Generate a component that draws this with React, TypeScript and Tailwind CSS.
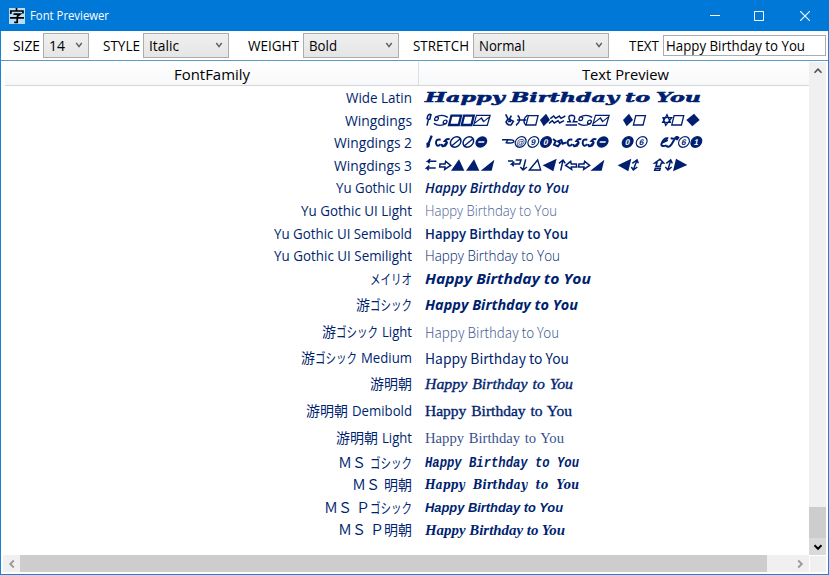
import { useLayoutEffect, useRef, useState } from "react";
import type { ReactNode } from "react";

const UI = "font-['Open_Sans','Noto_Sans_CJK_JP',sans-serif]";
const PHRASE = "Happy Birthday to You";

/** Single line of text stretched horizontally to an exact advance width. */
function Fit({ text, width, className = "" }: { text: string; width: number; className?: string }) {
  const ref = useRef<HTMLSpanElement>(null);
  const [scale, setScale] = useState(1);
  useLayoutEffect(() => {
    const exact = ref.current ? parseFloat(getComputedStyle(ref.current).width) : 0;
    if (exact) setScale(width / exact);
  }, [text, width]);
  return (
    <span className="flex shrink-0 whitespace-pre" style={{ width }}>
      <span ref={ref} className={`block shrink-0 origin-left ${className}`} style={{ transform: `scaleX(${scale})` }}>
        {text}
      </span>
    </span>
  );
}

function Chevron({ className, path }: { className: string; path: string }) {
  return (
    <svg className={className} viewBox="0 0 10 10" fill="none" stroke="currentColor">
      <path d={path} />
    </svg>
  );
}

function Combo({ value, textWidth, className }: { value: string; textWidth: number; className: string }) {
  return (
    <div className={`flex h-[25px] shrink-0 items-start justify-between border border-[#acacac] bg-linear-to-b from-[#f0f0f0] to-[#e5e5e5] pl-[5px] pr-[4px] ${className}`}>
      <Fit text={value} width={textWidth} className="text-[14px] leading-[23px]" />
      <Chevron className="mt-[6px] size-[10px] text-[#606060] [stroke-width:1.5]" path="M2.3 3 L5 6.6 L7.7 3" />
    </div>
  );
}

function Cancer({ x, y }: { x: number; y: number }) {
  return (
    <g transform={`translate(${x} ${y}) skewX(-12)`} strokeWidth="4">
      <circle cx="9" cy="12" r="5.5" />
      <circle cx="37" cy="22" r="5.5" />
      <path d="M4 8 Q22 -4 42 8 M42 26 Q24 38 4 26" />
    </g>
  );
}

function Envelope({ x, y }: { x: number; y: number }) {
  return (
    <g transform={`translate(${x} ${y}) skewX(-16)`} strokeWidth="3.8">
      <path d="M5 2 H46 V32 H5 Z M5 27 L22 10 L32 21 L46 6" />
    </g>
  );
}

function Box({ x, y, w = 4 }: { x: number; y: number; w?: number }) {
  return <path transform={`translate(${x} ${y}) skewX(-14)`} strokeWidth={w} d="M4 3 H33 V31 H4 Z" />;
}

function SymbolRow({ children }: { children: ReactNode }) {
  return (
    <svg className="-ml-[10px] h-[22px] w-[300px] shrink-0" viewBox="0 0 900 66" fill="none" stroke="currentColor" role="img" aria-label={PHRASE}>
      {children}
    </svg>
  );
}

function Wingdings() {
  return (
    <SymbolRow>
      <g transform="translate(22 0)">
        <path strokeWidth="4.5" d="M14 47 L19 25 M23 26 L26 14 Q20 11 16 18 L14 28 M25 16 L22 30" />
        <Cancer x={36} y={14} />
        <Box x={84} y={14} w={7} />
        <Box x={122} y={14} w={7} />
        <Envelope x={158} y={14} />
        <path strokeWidth="5" d="M250 13 L257 27 L251 36 Q256 48 267 44 L273 34 L261 28 L267 17 M257 27 L261 28 M257 34 H266" />
        <path strokeWidth="4.5" d="M286 16 Q301 29 281 46 M316 15 Q296 30 311 46 M284 30 H312" />
        <Box x={315} y={14} />
        <path fill="currentColor" stroke="none" d="M371 11 L383 30 L364 49 L353 30 Z" />
        <path strokeWidth="4.5" d="M384 26 L394 18 L400 25 L411 18 L416 25 L429 18 M380 40 L390 32 L396 39 L407 32 L412 39 L425 32" />
        <path strokeWidth="4.5" d="M430 45 H464 M434 35 H444 Q433 16 449 16 Q463 17 453 35 H466" />
        <Cancer x={469} y={14} />
        <Envelope x={515} y={14} />
        <path fill="currentColor" stroke="none" d="M620 11 L632 30 L613 49 L602 30 Z" />
        <Box x={637} y={14} />
        <path strokeWidth="4" d="M734 14 L744 37 L721 37 Z M730 46 L722 23 L748 23 Z" />
        <Box x={752} y={14} />
        <path fill="currentColor" stroke="none" d="M815 11 L832 30 L810 49 L792 30 Z" />
      </g>
    </SymbolRow>
  );
}

function Disc({ x, n, solid = false }: { x: number; n: string; solid?: boolean }) {
  return (
    <g transform={`translate(${x} 30) skewX(-12)`}>
      <circle r="16" strokeWidth="3.5" fill={solid ? "currentColor" : "none"} />
      <text className="font-['Liberation_Sans',sans-serif] text-[25px] font-bold" textAnchor="middle" y="9" stroke="none" fill={solid ? "white" : "currentColor"}>
        {n}
      </text>
    </g>
  );
}

/** Crossed-out ring. */
function Barred({ x }: { x: number }) {
  return (
    <g transform={`translate(${x} 30) skewX(-12)`} strokeWidth="4.5">
      <circle r="15.5" />
      <path d="M-9 11 L11 -9" />
    </g>
  );
}

/** Filled ring with a horizontal white bar. */
function Minus({ x }: { x: number }) {
  return (
    <g transform={`translate(${x} 30) skewX(-12)`}>
      <circle r="17.5" fill="currentColor" stroke="none" />
      <path stroke="white" strokeWidth="5" d="M-9 0 H9" />
    </g>
  );
}

function Loop({ x }: { x: number }) {
  return <path transform={`translate(${x} 18)`} strokeWidth="6" d="M17 5 Q2 2 3 16 Q6 29 17 19 M21 18 Q19 29 31 23 Q42 10 29 9 Q36 0 44 4 M25 25 L36 13" />;
}

function Wingdings2() {
  return (
    <SymbolRow>
      <g transform="translate(22 0)">
        <path strokeWidth="7" d="M28 11 L19 34" />
        <path fill="currentColor" stroke="none" d="M12 34 Q18 27 23 35 Q24 46 13 48 Z" />
        <Loop x={38} />
        <Barred x={100} />
        <Barred x={138} />
        <Minus x={177} />
        <path strokeWidth="4.5" d="M239 23 H257 Q277 22 274 30 Q267 35 252 32 L256 24" />
        <Disc x={295} n="@" />
        <Disc x={333} n="9" />
        <Disc x={371} n="0" solid />
        <path strokeWidth="6" d="M392 21 L400 27 L395 38 L407 43 L414 34 L407 28 L417 24 L421 35 L433 31" />
        <Loop x={433} />
        <Loop x={478} />
        <Minus x={541} />
        <Disc x={616} n="0" solid />
        <Disc x={658} n="6" />
        <path strokeWidth="6" d="M738 19 Q725 16 718 34 Q714 46 733 40 M720 32 L736 24 M745 19 L757 21 L747 38 Q738 49 732 41 M757 21 Q763 11 768 17 L762 24" />
        <Disc x={785} n="6" />
        <Disc x={822} n="1" solid />
      </g>
    </SymbolRow>
  );
}

function RightArrow({ x, flip = false }: { x: number; flip?: boolean }) {
  return (
    <path transform={flip ? `translate(${x + 38} 16) scale(-1 1)` : `translate(${x} 16)`} strokeWidth="4.5" d="M3 10 H18 L20 2 L35 14 L17 26 L18 19 H2 Z" />
  );
}

function Wingdings3() {
  return (
    <SymbolRow>
      <g transform="translate(21 1)">
        <path strokeWidth="4.5" d="M43 18 H17 L25 11 M17 18 L23 24 M41 38 H14 L22 31 M14 38 L20 45" />
        <RightArrow x={51} />
        <g fill="currentColor" stroke="none">
          <path d="M87 46 L111 12 L127 46 Z M132 46 L156 12 L172 46 Z M176 46 L217 13 L209 46 Z" />
          <path d="M362 30 L404 10 L394 48 Z M505 46 L547 13 L539 46 Z M587 30 L628 10 L619 48 Z M762 10 L796 29 L753 48 Z" />
        </g>
        <path strokeWidth="4.5" d="M258 17 H273 M281 14 H297 L293 26 H269 L277 19 M269 26 L275 33 M311 12 L303 44 M295 35 L303 44 L315 35 M416 46 L423 15 M411 24 L423 14 L430 24" />
        <path strokeWidth="4" d="M322 44 L347 14 L356 44 Z" />
        <RightArrow x={428} flip />
        <RightArrow x={468} />
        <path strokeWidth="4.5" d="M634 43 L645 15 M631 24 L645 14 L649 24 M628 35 L634 44 L646 35" />
        <path strokeWidth="4.5" d="M698 23 L714 12 L725 23 H718 L715 33 H702 L705 23 Z M700 39 H715 L713 45 H698 Z M738 43 L746 15 M733 24 L746 14 L751 24 M730 35 L738 44 L749 35" />
      </g>
    </SymbolRow>
  );
}

type Seg = [text: string, width: number, gap?: number];
type Row = { label: Seg[]; h: string; preview: ReactNode };

const sample = (width: number, className: string) => <Fit text={PHRASE} width={width} className={className} />;

const ROWS: Row[] = [
  { label: [["Wide Latin", 66]], h: "h-[22px]", preview: sample(276, "font-['DejaVu_Serif',serif] text-[12px] font-bold italic [-webkit-text-stroke:0.5px_currentColor] [word-spacing:-1px]") },
  { label: [["Wingdings", 67]], h: "h-[23px]", preview: <Wingdings /> },
  { label: [["Wingdings 2", 78]], h: "h-[22px]", preview: <Wingdings2 /> },
  { label: [["Wingdings 3", 78]], h: "h-[23px]", preview: <Wingdings3 /> },
  { label: [["Yu Gothic UI", 76]], h: "h-[22px]", preview: sample(144, "text-[14px] font-semibold italic") },
  { label: [["Yu Gothic UI Light", 111]], h: "h-[23px]", preview: sample(132, "text-[14px] font-light opacity-75") },
  { label: [["Yu Gothic UI Semibold", 138]], h: "h-[23px]", preview: sample(143, "text-[14px] font-semibold") },
  { label: [["Yu Gothic UI Semilight", 138]], h: "h-[22px]", preview: sample(135, "text-[14px] font-light") },
  { label: [["メイリオ", 42]], h: "h-[24px]", preview: sample(166, "font-['Open_Sans',sans-serif] text-[14px] font-bold italic") },
  { label: [["游", 14], ["ゴシック", 42]], h: "h-[27px]", preview: sample(153, "text-[14px] font-bold italic") },
  { label: [["游", 14], ["ゴシック", 42], ["Light", 30, 4]], h: "h-[27px]", preview: sample(134, "font-['Noto_Sans_CJK_JP',sans-serif] text-[14px] font-light opacity-75") },
  { label: [["游", 14], ["ゴシック", 42], ["Medium", 51, 4]], h: "h-[26px]", preview: sample(144, "font-['Noto_Sans_CJK_JP',sans-serif] text-[14px]") },
  { label: [["游明朝", 42]], h: "h-[26px]", preview: sample(148, "font-['Liberation_Serif',serif] text-[15px] italic [word-spacing:1px] [-webkit-text-stroke:0.35px_currentColor]") },
  { label: [["游明朝", 42], ["Demibold", 60, 4]], h: "h-[27px]", preview: sample(147, "font-['Liberation_Serif',serif] text-[15px] [word-spacing:1px] [-webkit-text-stroke:0.35px_currentColor]") },
  { label: [["游明朝", 42], ["Light", 30, 4]], h: "h-[27px]", preview: sample(139, "font-['Liberation_Serif',serif] text-[15px] [word-spacing:1px] opacity-80") },
  { label: [["ＭＳ", 28], ["ゴシック", 42, 4]], h: "h-[23px]", preview: sample(154, "font-['Liberation_Mono',monospace] text-[14px] font-bold italic") },
  { label: [["ＭＳ", 28], ["明朝", 28, 4]], h: "h-[22px]", preview: sample(154, "font-['DejaVu_Serif',serif] text-[12.5px] font-bold italic [word-spacing:5px]") },
  { label: [["ＭＳ", 28], ["Ｐ", 14, 4], ["ゴシック", 42]], h: "h-[23px]", preview: sample(138, "font-['Liberation_Sans',sans-serif] text-[13px] font-bold italic") },
  { label: [["ＭＳ", 28], ["Ｐ", 14, 4], ["明朝", 28]], h: "h-[22px]", preview: sample(140, "font-['Liberation_Serif',serif] text-[14.5px] font-bold italic") },
];

function FontRow({ row }: { row: Row }) {
  return (
    <div className={`flex shrink-0 items-center ${row.h}`}>
      <div className="flex w-[408px] shrink-0 justify-end text-[14px] leading-[22px]">
        {row.label.map(([text, width, gap], i) => (
          <span key={i} className="flex shrink-0" style={{ marginLeft: gap ?? 0 }}>
            <Fit text={text} width={width} />
          </span>
        ))}
      </div>
      <div className="ml-[13px] flex items-center text-[14px] leading-[22px]">{row.preview}</div>
    </div>
  );
}

function TitleBar() {
  return (
    <div className="flex h-[31px] shrink-0 items-center bg-[#0078d7] text-white">
      <svg className="ml-[9px] size-[16px]" viewBox="0 0 16 16" fill="none" stroke="black">
        <path fill="#b9ddf7" stroke="none" d="M0 0 H16 V16 H0 Z" />
        <path strokeWidth="1.7" d="M7.5 0 V2.5 M1.8 6 V3 H14 V5.5 M4.5 6.2 H11 L8 8.5 M1 9.8 H15 M8.2 8.5 V14.4 H5.2" />
      </svg>
      <div className="ml-[5px] flex grow">
        <Fit text="Font Previewer" width={79} className="text-[12px] leading-[30px]" />
      </div>
      <div className="flex h-full items-center gap-[35px] pr-[19px]">
        <svg className="size-[10px]" viewBox="0 0 10 10" stroke="white"><path d="M0 4.5 H10" /></svg>
        <svg className="-ml-px mr-px size-[10px]" viewBox="0 0 10 10" stroke="white" fill="none"><path d="M.5 .5 H9.5 V9.5 H.5 Z" /></svg>
        <svg className="size-[10px]" viewBox="0 0 10 10" stroke="white" strokeWidth="1.1"><path d="M0 0 L10 10 M10 0 L0 10" /></svg>
      </div>
    </div>
  );
}

function Toolbar() {
  const cap = "text-[14px] leading-[25px]";
  return (
    <div className="flex h-[29px] shrink-0 items-start bg-white pl-[12px] pt-[2px] text-black">
      <Fit text="SIZE" width={27} className={cap} />
      <Combo value="14" textWidth={16} className="ml-[3px] w-[46px]" />
      <div className="ml-[14px] flex"><Fit text="STYLE" width={37} className={cap} /></div>
      <Combo value="Italic" textWidth={30} className="ml-[3px] w-[86px]" />
      <div className="ml-[19px] flex"><Fit text="WEIGHT" width={51} className={cap} /></div>
      <Combo value="Bold" textWidth={28} className="ml-[4px] w-[96px]" />
      <div className="ml-[14px] flex"><Fit text="STRETCH" width={56} className={cap} /></div>
      <Combo value="Normal" textWidth={46} className="ml-[4px] w-[136px]" />
      <div className="ml-[20px] flex"><Fit text="TEXT" width={30} className={cap} /></div>
      <div className="ml-[4px] mt-[2px] flex h-[21px] w-[163px] items-start border border-[#abadb3] pl-[2px]">
        <Fit text={PHRASE} width={139} className="text-[14px] leading-[19px]" />
      </div>
    </div>
  );
}

export default function App() {
  return (
    <div className={`flex h-[575px] w-[829px] flex-col overflow-hidden bg-white ${UI}`}>
      <TitleBar />
      <div className="flex min-h-0 grow flex-col border-x border-b border-[#1883d7]">
        <Toolbar />
        <div className="h-px shrink-0 bg-[#5f9ac4]" />
        <div className="flex h-[494px] shrink-0 pr-[2px] pt-px">
          <div className="flex w-[808px] flex-col text-[#001f70]">
            <div className="ml-[4px] flex h-[24px] shrink-0 border-b border-[#d5d5d5] bg-linear-to-b from-white to-[#f7f8fa] text-black">
              <div className="flex w-[414px] justify-center border-r border-[#dedfe1]">
                <Fit text="FontFamily" width={76} className="text-[15px] leading-[25px]" />
              </div>
              <div className="flex w-[390px] justify-center pl-[22px]">
                <Fit text="Text Preview" width={87} className="text-[15px] leading-[25px]" />
              </div>
            </div>
            <div className="flex flex-col pl-[3px] pt-px">
              {ROWS.map((row, i) => (
                <FontRow key={i} row={row} />
              ))}
            </div>
          </div>
          <div className="flex w-[17px] flex-col bg-[#f0f0f0]">
            <div className="flex h-[17px] items-center justify-center">
              <Chevron className="size-[10px] text-[#505050] [stroke-width:1.6]" path="M1.5 6.8 L5 3.2 L8.5 6.8" />
            </div>
            <div className="mt-[428px] h-[31px] bg-[#cdcdcd]" />
            <div className="flex h-[17px] items-center justify-center bg-[#dadada]">
              <Chevron className="size-[10px] text-black [stroke-width:2]" path="M1.5 3.2 L5 6.8 L8.5 3.2" />
            </div>
          </div>
        </div>
        <div className="flex h-[17px] shrink-0 pl-[2px]">
          <div className="flex w-[806px] bg-[#f0f0f0]">
            <div className="flex w-[17px] items-center justify-center">
              <Chevron className="size-[10px] text-[#999] [stroke-width:1.8]" path="M6.8 1.5 L3.2 5 L6.8 8.5" />
            </div>
            <div className="w-[747px] bg-[#cdcdcd]" />
            <div className="flex grow items-center justify-center pl-[24px]">
              <Chevron className="size-[10px] text-[#999] [stroke-width:1.8]" path="M3.2 1.5 L6.8 5 L3.2 8.5" />
            </div>
          </div>
          <div className="ml-px mt-px w-[16px] bg-[#f0f0f0]" />
        </div>
      </div>
    </div>
  );
}
